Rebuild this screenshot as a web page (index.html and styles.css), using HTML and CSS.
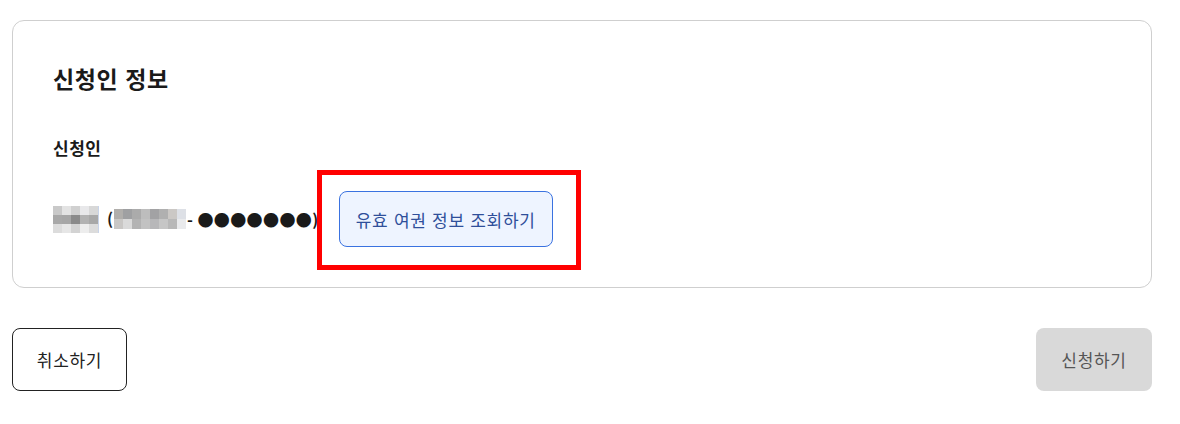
FILE: index.html
```html
<!DOCTYPE html>
<html lang="ko">
<head>
<meta charset="utf-8">
<link rel="stylesheet" href="styles.css">
</head>
<body>
<div class="page">
  <section class="card">
    <h2 class="card-title">신청인 정보</h2>
    <div class="field">
      <div class="field-label">신청인</div>
      <div class="field-row">
        <div class="applicant">
          <div class="mosaic mosaic-name">
            <i class="c1"></i><i class="c2"></i><i class="c3"></i><i class="c4"></i><i class="c5"></i>
            <i class="c6"></i><i class="c7"></i><i class="c8"></i><i class="c9"></i><i class="c6"></i>
            <i class="c10"></i><i class="c11"></i><i class="c12"></i><i class="c13"></i><i class="c10"></i>
          </div>
          <span class="paren">(</span>
          <div class="mosaic mosaic-id">
            <i class="d1"></i><i class="d2"></i><i class="d3"></i><i class="d4"></i><i class="d5"></i><i class="d6"></i><i class="d7"></i><i class="d8"></i>
            <i class="d9"></i><i class="d10"></i><i class="d11"></i><i class="d12"></i><i class="d13"></i><i class="d14"></i><i class="d15"></i><i class="d16"></i>
          </div>
          <span class="masked">- ●●●●●●●)</span>
        </div>
        <span class="highlight-wrap">
          <button class="btn-lookup" type="button">유효 여권 정보 조회하기</button>
          <span class="highlight"></span>
        </span>
      </div>
    </div>
  </section>
  <div class="actions">
    <button class="btn btn-cancel" type="button">취소하기</button>
    <button class="btn btn-submit" type="button" disabled>신청하기</button>
  </div>
</div>
</body>
</html>
```
FILE: styles.css
```css
* { box-sizing: border-box; }
html, body { margin: 0; padding: 0; background: #fff; }
body {
  font-family: "Noto Sans CJK KR", "Noto Sans", sans-serif;
  color: #1a1a1a;
}
.page {
  width: 1140px;
  margin: 20px 0 0 12px;
}
.card {
  border: 1px solid #cfcfcf;
  border-radius: 12px;
  height: 268px;
  padding: 40px 40px 0;
}
.card-title {
  margin: 0;
  font-size: 23px;
  letter-spacing: 0.6px;
  font-weight: 700;
  line-height: 34px;
  color: #1a1a1a;
}
.field { margin-top: 41px; }
.field-label {
  font-size: 17px;
  letter-spacing: 0.5px;
  font-weight: 700;
  line-height: 24px;
}
.field-row {
  margin-top: 31px;
  display: flex;
  align-items: center;
  gap: 20px;
}
.applicant {
  display: flex;
  align-items: center;
  font-size: 16px;
  font-weight: 700;
}
.mosaic { display: grid; }
.mosaic i { display: block; }
.mosaic-name {
  grid-template-columns: repeat(5, 9px);
  grid-template-rows: repeat(3, 9px);
  border-right: 1px solid #c8d4ea;
}
.mosaic-id {
  grid-template-columns: repeat(8, 9px);
  grid-template-rows: repeat(2, 10px);
}
.paren { margin-left: 8px; margin-right: 1px; }
.masked { margin-left: 1px; letter-spacing: 0.4px; }
.c1 { background: #c9c9c9; } .c2 { background: #e3e3e3; } .c3 { background: #d0d0d0; }
.c4 { background: #e8e8ea; } .c5 { background: #d8d8d8; } .c6 { background: #a8a8a8; }
.c7 { background: #a6a6a6; } .c8 { background: #8a8a8a; } .c9 { background: #b2b2b2; }
.c10 { background: #dcdcdc; } .c11 { background: #e6e6e6; } .c12 { background: #d3d3d3; }
.c13 { background: #ededed; }
.d1 { background: #b0aeab; } .d2 { background: #9fa0a2; } .d3 { background: #ababab; }
.d4 { background: #bdbdbd; } .d5 { background: #a2a2a4; } .d6 { background: #b0b0b0; }
.d7 { background: #cbc8c5; } .d8 { background: #dde0e6; } .d9 { background: #c9c7c5; }
.d10 { background: #dadada; } .d11 { background: #b3b3b3; } .d12 { background: #c2c2c2; }
.d13 { background: #b7b7b9; } .d14 { background: #c6c6c6; } .d15 { background: #b8b8b8; }
.d16 { background: #e9eaec; }
.highlight-wrap { position: relative; display: inline-block; }
.btn-lookup {
  display: block;
  width: 214px;
  height: 56px;
  border: 1px solid #3a72e0;
  border-radius: 8px;
  background: #eef4ff;
  color: #2f4f9a;
  font-family: inherit;
  font-size: 17px;
  letter-spacing: 0.7px;
  padding: 0;
}
.highlight {
  position: absolute;
  left: -22px;
  top: -21px;
  right: -28px;
  bottom: -23px;
  border: 5px solid #ff0000;
  pointer-events: none;
}
.actions {
  margin-top: 40px;
  display: flex;
  justify-content: space-between;
}
.btn {
  height: 63px;
  border-radius: 8px;
  font-family: inherit;
  font-size: 17px;
  letter-spacing: 0.7px;
  padding: 0;
}
.btn-cancel {
  width: 115px;
  border: 1px solid #222;
  background: #fff;
  color: #222;
}
.btn-submit {
  width: 116px;
  border: none;
  background: #d9d9d9;
  color: #555;
}
```
